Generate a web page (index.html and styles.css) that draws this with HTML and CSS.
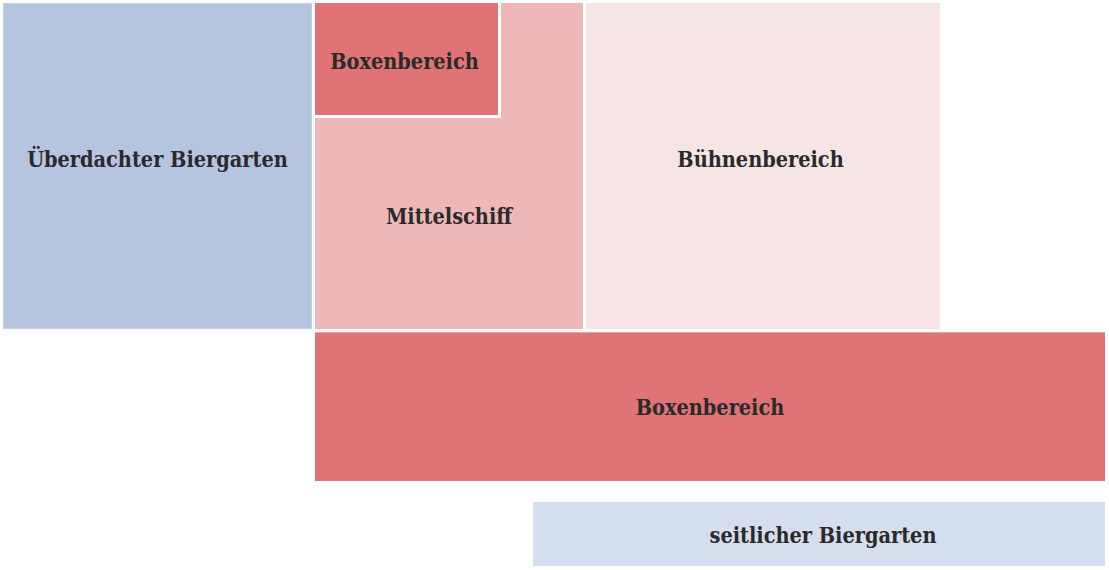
FILE: index.html
```html
<!DOCTYPE html>
<html lang="de">
<head>
<meta charset="utf-8">
<title>Hallenplan</title>
<link rel="stylesheet" href="styles.css">
</head>
<body>
<div class="plan">
  <div class="area area--covered"><span class="label">Überdachter Biergarten</span></div>
  <div class="area area--nave"><span class="label">Mittelschiff</span></div>
  <div class="area area--boxes-small"><span class="label">Boxenbereich</span></div>
  <div class="area area--stage"><span class="label">Bühnenbereich</span></div>
  <div class="area area--boxes-large"><span class="label">Boxenbereich</span></div>
  <div class="area area--side"><span class="label">seitlicher Biergarten</span></div>
</div>
</body>
</html>
```
FILE: styles.css
```css
html, body {
  margin: 0;
  padding: 0;
  background: #ffffff;
}

.plan {
  position: relative;
  width: 1109px;
  height: 570px;
  font-family: "DejaVu Serif Condensed", "DejaVu Serif", serif;
  font-weight: bold;
  font-size: 21.5px;
  color: #2a2a2a;
}

.area {
  position: absolute;
  box-sizing: border-box;
  display: flex;
  align-items: center;
  justify-content: center;
}

.label {
  white-space: nowrap;
}

.area--covered {
  left: 3px;
  top: 3px;
  width: 309px;
  height: 326px;
  background: #b5c5e0;
  border: 1px solid #c3d0e6;
  padding-bottom: 14px;
}

.area--nave {
  left: 315px;
  top: 3px;
  width: 268px;
  height: 326px;
  background: #efb8b8;
  padding-top: 115px;
  padding-bottom: 14px;
}

.area--boxes-small {
  left: 315px;
  top: 3px;
  width: 186px;
  height: 115px;
  background: #e07375;
  border-right: 3px solid #ffffff;
  border-bottom: 3px solid #ffffff;
  padding-top: 4px;
  padding-right: 4px;
}

.area--stage {
  left: 586px;
  top: 3px;
  width: 354px;
  height: 326px;
  background: #f7e5e6;
  padding-bottom: 14px;
  padding-right: 5px;
}

.area--boxes-large {
  left: 315px;
  top: 332px;
  width: 790px;
  height: 149px;
  background: #e07375;
  border-top: 1px solid #eaa0a1;
}

.area--side {
  left: 533px;
  top: 502px;
  width: 572px;
  height: 64px;
  background: #d5deee;
  padding-left: 8px;
  padding-top: 2px;
}
```
